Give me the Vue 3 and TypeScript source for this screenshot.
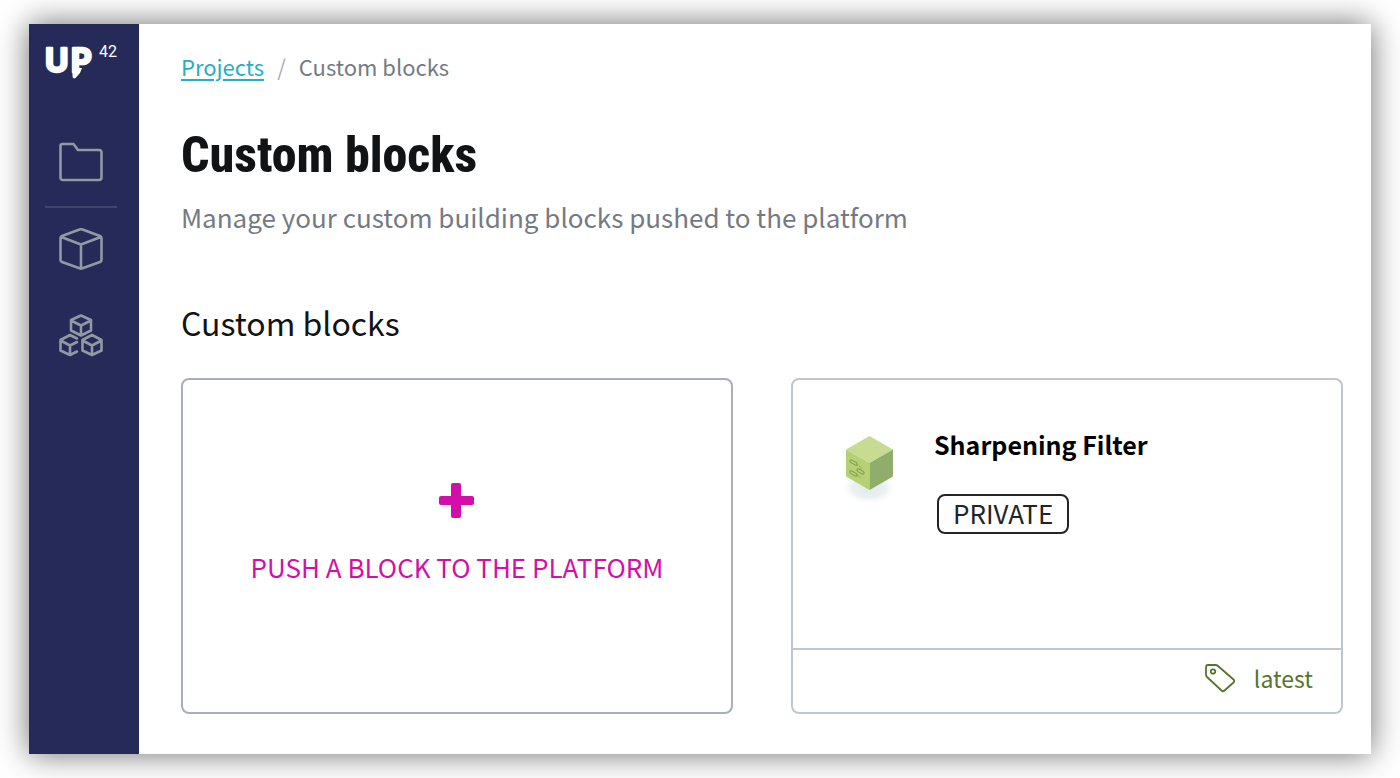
<script setup lang="ts">
interface Block {
  name: string
  visibility: string
  tag: string
}

const blocks: Block[] = [
  { name: 'Sharpening Filter', visibility: 'PRIVATE', tag: 'latest' },
]
</script>

<template>
  <div class="window">
    <aside class="sidebar">
      <a class="logo" href="#" aria-label="UP42 home">
        <svg class="logo-mark" width="52" height="34" viewBox="0 0 52 34" aria-hidden="true">
          <text x="0" y="26">U</text>
          <text x="26" y="26">P</text>
          <path d="M27.500 22H37L35 27L31 31.500Q29.500 33 28.200 32Q27.500 31.500 27.500 30Z" />
        </svg>
        <sup class="logo-number">42</sup>
      </a>
      <nav class="nav" aria-label="Main">
        <a class="nav-link" href="#" aria-label="Projects">
          <svg width="46" height="42" viewBox="0 0 46 42">
            <path d="M4.500 3H15.500L20 9H41Q43.500 9 43.500 11.500V36.500Q43.500 39 41 39H5Q2.500 39 2.500 36.500V5Q2.500 3 4.500 3Z" />
          </svg>
        </a>
        <hr class="nav-rule" />
        <a class="nav-link" href="#" aria-label="Blocks">
          <svg width="46" height="44" viewBox="0 0 46 44">
            <path d="M21.500 2.500Q23 2 24.500 2.500L42 9Q43.500 9.600 43.500 11V33Q43.500 34.500 42 35L24.500 41.300Q23 41.900 21.500 41.300L4 35Q2.500 34.500 2.500 33V11Q2.500 9.600 4 9ZM3.200 10L23 17.500L42.800 10M23 17.500V41.500" />
          </svg>
        </a>
        <a class="nav-link" href="#" aria-label="Custom blocks">
          <svg width="46" height="44" viewBox="0 0 46 44">
            <path d="M23 2.500L33 7V17.500L23 22.500L13 17.500V7ZM13 7.500L23 12.500L33 7.500M23 12.500V22" />
            <path d="M19 25.500L12 22L2.500 27V37.500L12 42L19 38.500M2.500 27.500L12 32.500L19 29M12 32.500V42" />
            <path d="M34 22L43.500 27V37.500L34 42L24.500 37.500V27ZM24.500 27.500L34 32.500L43.500 27.500M34 32.500V42" />
          </svg>
        </a>
      </nav>
    </aside>

    <main class="content">
      <nav class="breadcrumb" aria-label="Breadcrumb">
        <a class="crumb-link" href="#">Projects</a>
        <span class="crumb-slash">/</span>
        <span>Custom blocks</span>
      </nav>
      <h1 class="title">Custom blocks</h1>
      <p class="subtitle">Manage your custom building blocks pushed to the platform</p>

      <h2 class="section-title">Custom blocks</h2>
      <div class="cards">
        <button class="card push-card" type="button">
          <svg width="36" height="36" viewBox="0 0 36 36" aria-hidden="true">
            <rect x="12" y="0" width="10" height="35" rx="2" />
            <rect x="0" y="13" width="35" height="9" rx="2" />
          </svg>
          <span>PUSH A BLOCK TO THE PLATFORM</span>
        </button>

        <article v-for="block in blocks" :key="block.name" class="card block-card">
          <div class="block-body">
            <svg class="block-icon" width="56" height="72" viewBox="0 0 56 72" aria-hidden="true">
              <defs>
                <radialGradient id="ground-shade">
                  <stop offset="0" stop-color="#e2eaee" />
                  <stop offset="0.6" stop-color="#eaf0f3" />
                  <stop offset="1" stop-color="#f6f9fb" stop-opacity="0" />
                </radialGradient>
              </defs>
              <ellipse cx="28" cy="53" rx="27" ry="16" fill="url(#ground-shade)" />
              <path d="M28.500 1L52 14.500L28.500 28L5 14.500Z" fill="#c8db92" />
              <path d="M5 14.500L28.500 28V55L5 41.500Z" fill="#b6d175" />
              <path d="M52 14.500L28.500 28V55L52 41.500Z" fill="#91ad6c" />
              <g fill="none" stroke="#7c9850" stroke-width="1">
                <path d="M9 25L11 25L16 28V30L14 30L9 27ZM16 34L18 34L23 37V39L21 39L16 36ZM9 36L11 36L16 39V41L14 41L9 38Z" />
                <path d="M16 30L20 32V35M16 40L19 42V43" stroke-dasharray="1 1" />
              </g>
            </svg>
            <div class="block-info">
              <h3 class="block-name">{{ block.name }}</h3>
              <span class="badge">{{ block.visibility }}</span>
            </div>
          </div>
          <footer class="block-footer">
            <svg width="32" height="30" viewBox="0 0 32 30" aria-hidden="true">
              <path d="M4 2H11.500Q13 2 14 3L29.500 16.500Q31 18 29.500 19.500L20.500 27.500Q19 29 17.500 27.500L3 14Q2 13 2 11.500V4Q2 2 4 2Z" />
              <circle cx="9" cy="8.500" r="2.200" />
            </svg>
            <span>{{ block.tag }}</span>
          </footer>
        </article>
      </div>
    </main>
  </div>
</template>

<style>
body {
  margin: 0;
  background: #fff;
}
</style>

<style scoped>
.window {
  display: flex;
  box-sizing: border-box;
  min-height: calc(100vh - 48px);
  margin: 24px 29px;
  background: #fff;
  box-shadow: 0 0 30px rgba(0, 0, 0, 0.58);
  font-family: "Noto Sans CJK SC", "Noto Sans", sans-serif;
  color: #111314;
}

.sidebar {
  flex: none;
  width: 110px;
  background: #262a59;
}

.logo {
  display: flex;
  box-sizing: border-box;
  height: 80px;
  padding: 20px 0 0 16px;
  color: #fff;
  text-decoration: none;
}

.logo-mark {
  flex: none;
  margin-top: 2px;
  overflow: visible;
  fill: #fff;
}

.logo-mark text {
  font: 700 32px Inter, sans-serif;
  stroke: #fff;
  stroke-width: 2.5;
  stroke-linejoin: round;
}

.logo-number {
  margin-left: 2px;
  font: 400 16px/16px Roboto, sans-serif;
}

.nav {
  display: flex;
  flex-direction: column;
  align-items: center;
  padding: 37px 22px 0 16px;
}

.nav-link {
  display: flex;
}

.nav-link svg {
  fill: none;
  stroke: #9299a2;
  stroke-width: 2.6;
  stroke-linejoin: round;
  stroke-linecap: round;
}

.nav-rule {
  width: 100%;
  height: 2px;
  margin: 23px 0 19px;
  border: 0;
  background: #40446d;
}

.nav-link + .nav-link {
  margin-top: 42px;
}

.content {
  flex: 1;
  min-width: 0;
  padding: 26px 28px 40px 42px;
}

.breadcrumb {
  display: flex;
  gap: 13px;
  font-size: 22px;
  line-height: 32px;
  color: #747a84;
}

.crumb-link {
  color: #22afc7;
  text-decoration-thickness: 2px;
  text-underline-offset: 3px;
}

.crumb-slash {
  color: #a8adb9;
}

.title {
  margin: 43px 0 0;
  font: 800 50px/60px "Roboto Condensed", "Liberation Sans Narrow", Roboto, sans-serif;
}

.subtitle {
  margin: 12px 0 0;
  font-size: 26px;
  line-height: 40px;
  color: #747a84;
}

.section-title {
  margin: 60px 0 0;
  font-size: 32px;
  font-weight: 400;
  line-height: 50px;
}

.cards {
  display: grid;
  grid-template-columns: repeat(2, minmax(0, 1fr));
  gap: 58px;
  margin-top: 31px;
}

.card {
  box-sizing: border-box;
  min-height: 336px;
  border: 2px solid #bfc5d1;
  border-radius: 8px;
  background: #fff;
}

.push-card {
  display: flex;
  flex-direction: column;
  align-items: center;
  justify-content: center;
  gap: 28px;
  padding: 0 0 22px;
  border-color: #a8aebd;
  font: inherit;
  font-size: 26px;
  line-height: 40px;
  color: #d40fa9;
  cursor: pointer;
}

.push-card svg {
  fill: currentColor;
}

.block-card {
  display: flex;
  flex-direction: column;
}

.block-body {
  display: flex;
  flex: 1;
  gap: 37px;
  padding: 44px 48px;
}

.block-icon {
  flex: none;
  margin-top: 11px;
}

.block-name {
  margin: 0;
  font-size: 25px;
  font-weight: 700;
  line-height: 40px;
  color: #000;
}

.badge {
  display: inline-block;
  margin: 30px 0 0 3px;
  padding: 0 14px 2px;
  border: 2px solid #222426;
  border-radius: 8px;
  font-size: 26px;
  line-height: 34px;
  color: #222426;
}

.block-footer {
  display: flex;
  align-items: center;
  justify-content: flex-end;
  gap: 18px;
  box-sizing: border-box;
  height: 64px;
  padding: 0 28px 6px;
  border-top: 2px solid #bfc5d1;
  font-size: 23px;
  line-height: 36px;
  color: #56752d;
}

.block-footer svg {
  fill: none;
  stroke: currentColor;
  stroke-width: 1.8;
}
</style>
